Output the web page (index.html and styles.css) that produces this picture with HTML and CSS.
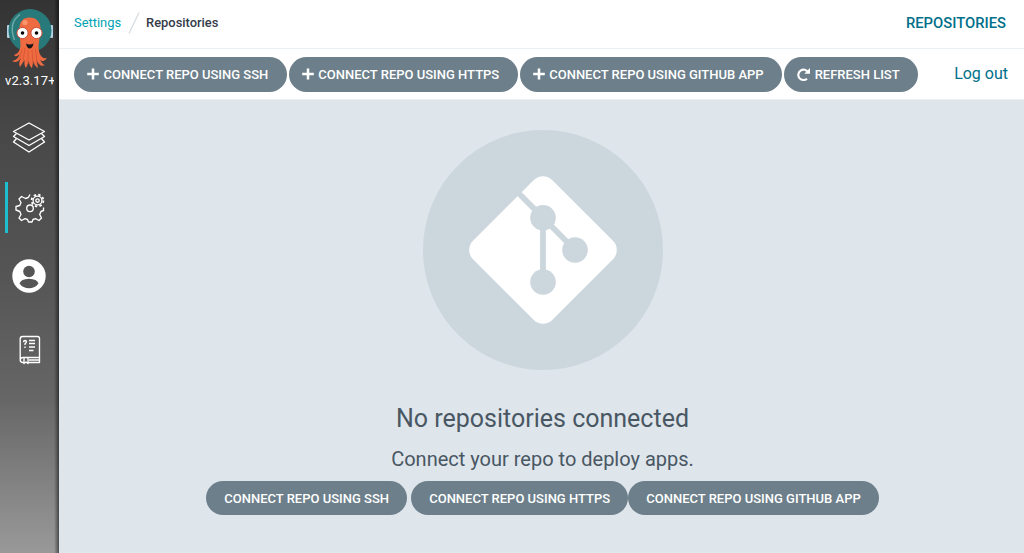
FILE: index.html
```html
<!DOCTYPE html>
<html lang="en">
<head>
<meta charset="utf-8">
<title>Repositories</title>
<link rel="stylesheet" href="styles.css">
</head>
<body>
<div class="layout">
  <nav class="sidebar">
    <svg class="logo" viewBox="0 0 48 62" width="48" height="62">
      <rect x="1" y="17" width="3" height="13" rx="1" fill="#b4d3e5"/>
      <rect x="44" y="17" width="3" height="13" rx="1" fill="#b4d3e5"/>
      <circle cx="24" cy="22.500" r="21.500" fill="#287a7a"/>
      <path d="M8.500 32Q2 15 14 6.500" fill="none" stroke="#72aaa7" stroke-width="1.400"/>
      <path d="M13.500 22C13 14 17 9.500 23.500 9.500S35 14 34.500 22L32.500 38Q32.500 46 36 49Q38 51 41 50Q38 55 34 52Q37 57 39 57Q34 60 30.500 52L32 60Q28 58 27.500 53L26 60Q23 58 23 53L20 60Q18 58 18.500 52L14 59Q12 56 15 50Q11 56 6 53Q12 52 13.500 46Q10 50 8 47Q14 45 14.500 38Z" fill="#ee6b42"/>
      <path d="M19 40L17 53M22 42L22 56M26 42L27 56M29.500 41L31 55M16 42L13 52" stroke="#d4532f" stroke-width=".8" fill="none"/>
      <circle cx="19" cy="14.500" r="2.600" fill="#fa956c"/>
      <circle cx="16.500" cy="25" r="5.600" fill="#fff" stroke="#cf4b36"/>
      <circle cx="30.500" cy="25" r="5.600" fill="#fff" stroke="#cf4b36"/>
      <circle cx="16.500" cy="25" r="1.800"/><circle cx="30.500" cy="25" r="1.800"/>
      <path d="M20 35.500Q23.500 37.500 27.500 35.500Q26.500 40.500 23.500 40.500Q21 40.500 20 35.500Z" fill="#171719"/>
    </svg>
    <div class="version">v2.3.17+5e8a2c1</div>
    <a class="nav-item nav-item-first">
      <svg width="34" height="34" viewBox="0 0 34 34" class="line-icon">
        <path d="M17 2L32.500 10.500L17 19L1.500 10.500Z"/>
        <path d="M4.500 12.500L1.500 15.500L17 24.500L32.500 15.500L29.500 12.500"/>
        <path d="M4.500 17.500L1.500 21L17 31L32.500 21L29.500 17.500"/>
      </svg>
    </a>
    <a class="nav-item nav-item-active">
      <svg width="34" height="34" viewBox="0 0 34 34" class="line-icon">
        <path d="M17 4.500L15.300 7.500L12.500 8.500L8.500 6.500L6 9L8 12.500L6.800 15.500L3 16.500V20L6.800 21.500L8 24.500L6 28L8.500 30.500L12 28.700L14.500 29.500L15.500 32H19L20 29.500L22.500 28.700L26 30.500L28.500 28L26.700 24.500L28 21.500L30.500 20.500V17.500"/>
        <circle cx="17" cy="18.300" r="3.300"/>
        <circle cx="24.500" cy="10.500" r="4.400"/>
        <circle cx="24.500" cy="10.500" r="5.900" stroke-width="1.800" stroke-dasharray="2.400 2.234"/>
        <circle cx="24.500" cy="10.500" r="1.700"/>
      </svg>
    </a>
    <a class="nav-item nav-item-user">
      <svg width="34" height="34" viewBox="0 0 34 34">
        <circle cx="17" cy="17" r="16.700" fill="#fff"/>
        <circle cx="17" cy="12.500" r="5.800" fill="#555"/>
        <path d="M7.500 24.500Q9 20 17 19.700Q25 20 26.500 24.500Q23 29.300 17 29.300Q11 29.300 7.500 24.500Z" fill="#555"/>
      </svg>
    </a>
    <a class="nav-item nav-item-docs">
      <svg width="22" height="30" viewBox="0 0 22 30" class="line-icon">
        <path d="M3.500 1.500H18.500Q20.500 1.500 20.500 3.500V27.500H9M5 27.500H3.500Q1 27 1.200 24.500V4Q1.200 1.500 3.500 1.500M1.200 25Q1.500 22.500 4 22.500H20.500M5 23V28.500L7 27L9 28.500V23M10 25H20"/>
        <path d="M4.500 7.200Q4.700 5.500 6 5.500Q8 5.700 7.200 7.500L6 8.800V10M6 11.500V13M10 5.500H16M10 8.500H16M10 12H16M10 15.500H14.500"/>
      </svg>
    </a>
  </nav>
  <div class="page">
    <header class="top-bar">
      <div class="breadcrumbs">
        <a class="crumb-link">Settings</a>
        <svg class="crumb-slash" width="12" height="22" viewBox="0 0 12 22"><path d="M1 21.500L11 0.500" stroke="#d5dde2" stroke-width="1.300"/></svg>
        <span>Repositories</span>
      </div>
      <div class="page-title">REPOSITORIES</div>
    </header>
    <div class="toolbar">
      <div class="actions">
        <button class="button"><svg class="icon" viewBox="0 0 12 12"><path d="M6 0.500V11.500M0.200 6H11.800" stroke="#fff" stroke-width="2.500"/></svg>CONNECT REPO USING SSH</button>
        <button class="button"><svg class="icon" viewBox="0 0 12 12"><path d="M6 0.500V11.500M0.200 6H11.800" stroke="#fff" stroke-width="2.500"/></svg>CONNECT REPO USING HTTPS</button>
        <button class="button"><svg class="icon" viewBox="0 0 12 12"><path d="M6 0.500V11.500M0.200 6H11.800" stroke="#fff" stroke-width="2.500"/></svg>CONNECT REPO USING GITHUB APP</button>
        <button class="button"><svg class="icon icon-refresh" viewBox="0 0 13 13"><path d="M11 4.200A5.200 5.200 0 1 0 10 10.700" fill="none" stroke="#fff" stroke-width="2.100"/><path d="M13 0V5.700H7.300Z" fill="#fff"/></svg>REFRESH LIST</button>
      </div>
      <a class="logout">Log out</a>
    </div>
    <main class="empty-state">
      <svg class="git-badge" width="240" height="240" viewBox="0 0 240 240">
        <circle cx="120" cy="120" r="120" fill="#ccd6dd"/>
        <rect x="64" y="64" width="112" height="112" rx="13" fill="#fff" transform="rotate(45 120 120)"/>
        <g fill="none" stroke="#ccd6dd" stroke-width="5.800"><path d="M94 61.500L152 120M120 88V152"/></g>
        <g fill="#ccd6dd"><circle cx="120" cy="87.700" r="12.800"/><circle cx="152" cy="120" r="12.800"/><circle cx="120" cy="152" r="12.800"/></g>
      </svg>
      <h4>No repositories connected</h4>
      <h5>Connect your repo to deploy apps.</h5>
      <div class="empty-actions">
        <button class="button button-plain">CONNECT REPO USING SSH</button>
        <button class="button button-plain">CONNECT REPO USING HTTPS</button>
        <button class="button button-plain">CONNECT REPO USING GITHUB APP</button>
      </div>
    </main>
  </div>
</div>
</body>
</html>
```
FILE: styles.css
```css
* { box-sizing: border-box; }
body { margin: 0; font-family: Roboto, sans-serif; color: #495763; }
.layout { display: flex; height: 553px; overflow: hidden; }
.sidebar {
  width: 59px; flex: none; padding: 8px 0 0 5px;
  display: flex; flex-direction: column; align-items: flex-start;
  background: linear-gradient(to right, transparent 54px, rgba(0,0,0,.5)), linear-gradient(#333, #484848 24%, #555 50%, #666 72%, #999);
}
.logo { margin-left: 1px; flex: none; }
.version { width: 48.5px; padding: 2px 0 0; overflow: hidden; white-space: nowrap; color: #fff; font-size: 13px; line-height: 17px; letter-spacing: .12px; flex: none; }
.nav-item { width: 48px; height: 50px; margin-top: 21px; margin-bottom: -2px; display: flex; align-items: center; justify-content: center; flex: none; }
.nav-item-first { margin-top: 23px; padding-top: 1px; }
.nav-item-active { margin-top: 22px; border-left: 3px solid #1fbdd0; padding: 0 2px 2px 0; height: 51px; }
.nav-item-user { padding-bottom: 2px; }
.nav-item-docs { width: 49px; margin-top: 25px; }
.line-icon { fill: none; stroke: #fff; stroke-width: 1.35; stroke-linejoin: round; }
.page { flex: 1; display: flex; flex-direction: column; background: #dee5eb; }
.top-bar { height: 49px; padding: 0 18px 3px 15px; display: flex; justify-content: space-between; align-items: center; background: #fff; border-bottom: 1px solid #ebf0f4; }
.breadcrumbs { display: flex; align-items: center; font-size: 12.9px; font-weight: 500; color: #363c4a; }
.crumb-link { color: #00a2b3; font-weight: 400; }
.crumb-slash { margin: 0 6px 0 7px; }
.page-title { padding-top: 1px; color: #006f8a; font-size: 14.8px; font-weight: 500; }
.toolbar { height: 51px; padding: 0 16px 0 15px; display: flex; justify-content: space-between; align-items: center; background: #fff; border-bottom: 1px solid #ebf0f4; }
.actions { display: flex; gap: 2px; }
.button { display: flex; align-items: center; height: 35px; margin: 0; padding: 0 18px 0 13px; border: 0; border-radius: 18px; background: #6d7f8b; color: #fff; font: 500 13px Roboto, sans-serif; white-space: nowrap; }
.actions .button { padding-right: 18.4px; }
.icon { width: 12px; height: 12px; margin-right: 4.6px; }
.icon-refresh { width: 13px; height: 13px; }
.logout { margin-top: -1px; color: #006f8a; font-size: 16px; }
.empty-state { flex: 1; padding: 30px 0 0 2px; display: flex; flex-direction: column; align-items: center; }
.git-badge { flex: none; margin-left: 1px; }
h4 { margin: 31px 0 0; font-size: 25px; font-weight: 400; line-height: 36px; }
h5 { margin: 7px 0 0; font-size: 20px; font-weight: 400; line-height: 30px; }
.empty-actions { display: flex; margin-top: 7px; }
.button-plain { height: 34px; padding: 0 18.1px; }
.button-plain:first-child { margin-right: 4px; }
```
